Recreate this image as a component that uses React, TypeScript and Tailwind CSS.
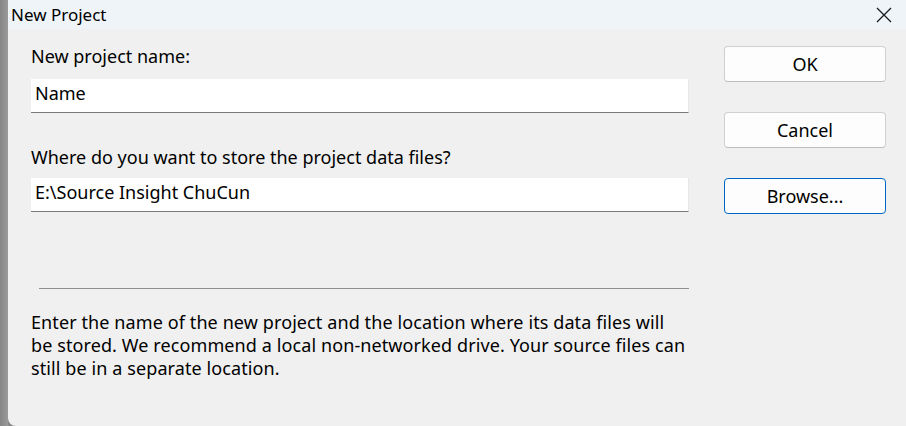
import React from "react";

export default function App() {
  const font = { fontFamily: '"Noto Sans", "Segoe UI", sans-serif' };
  return (
    <div className="w-[906px] h-[426px] flex bg-[#8a8a8a] overflow-hidden" style={font}>
      <div className="w-[8px] h-full bg-gradient-to-r from-[#858585] to-[#9a9a9a]" />
      <div className="flex-1 flex flex-col bg-[#f0f0f0] rounded-bl-[8px] text-black">
        <div className="h-[29px] bg-[#eff4f9] flex items-center justify-between">
          <span className="pl-[3px] text-[17px] leading-[20px]">New Project</span>
          <svg width="16" height="16" viewBox="0 0 16 16" className="mr-[14px]">
            <path d="M1 1 L15 15 M15 1 L1 15" stroke="#1a1a1a" strokeWidth="1.3" />
          </svg>
        </div>
        <div className="flex flex-1">
          <div className="w-[681px] pl-[23px] flex flex-col">
            <div className="mt-[15px] text-[18px] leading-[24px]">New project name:</div>
            <div className="mt-[11px] h-[34px] bg-white border-b border-[#7a7a7a] border-r border-r-[#e6e6e6] pl-[4px] pt-[2px] text-[18px] leading-[24px]">
              Name
            </div>
            <div className="mt-[32px] text-[18px] leading-[24px]">Where do you want to store the project data files?</div>
            <div className="mt-[9px] h-[34px] bg-white border-b border-[#7a7a7a] border-r border-r-[#e6e6e6] pl-[4px] pt-[2px] text-[18px] leading-[24px]">
              E:\Source Insight ChuCun
            </div>
            <div className="mt-[76px] ml-[8px] h-px bg-[#8f8f8f]" />
            <div className="mt-[22px] text-[18px] leading-[23px] tracking-[0.1px]">
              Enter the name of the new project and the location where its data files will be stored. We recommend a local non-networked drive. Your source files can still be in a separate location.
            </div>
          </div>
          <div className="ml-[35px] w-[162px] pt-[17px] flex flex-col gap-[30px]">
            <button className="h-[36px] rounded-[4px] bg-[#fdfdfd] border border-[#d0d0d0] border-b-[#bdbdbd] text-[18px] leading-[24px]">OK</button>
            <button className="h-[36px] rounded-[4px] bg-[#fdfdfd] border border-[#d0d0d0] border-b-[#bdbdbd] text-[18px] leading-[24px]">Cancel</button>
            <button className="h-[36px] rounded-[4px] bg-[#fdfdfd] border-[1.5px] border-[#0067c0] text-[18px] leading-[24px]">Browse...</button>
          </div>
        </div>
      </div>
    </div>
  );
}
